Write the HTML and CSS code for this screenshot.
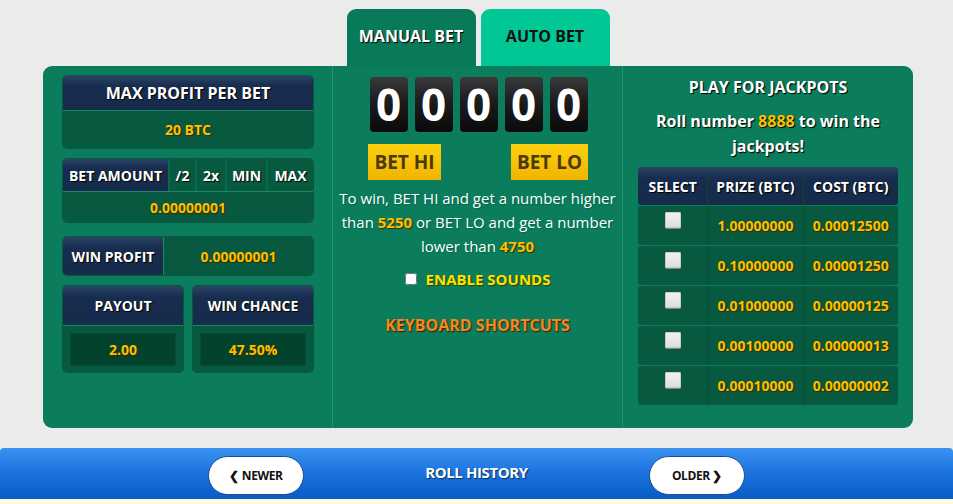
FILE: index.html
```
<!DOCTYPE html>
<html lang="en">
<head>
  <meta charset="UTF-8" />
  <meta name="viewport" content="width=device-width, initial-scale=1.0" />
  <title>Free BTC Multiply</title>
  <link rel="stylesheet" href="styles.css">
</head>
<body>
  <div class="tabs">
    <div class="tab tab-manual">MANUAL BET</div>
    <div class="tab tab-auto">AUTO BET</div>
  </div>

  <div class="panel">
    <!-- left: bet settings -->
    <div class="col col-left">
      <div class="box">
        <div class="head head-big">MAX PROFIT PER BET</div>
        <div class="val">20 BTC</div>
      </div>

      <div class="box amount">
        <div class="amount-row">
          <div class="head cell-label">BET AMOUNT</div>
          <div class="cell cell-half">/2</div>
          <div class="cell cell-double">2x</div>
          <div class="cell cell-min">MIN</div>
          <div class="cell cell-max">MAX</div>
        </div>
        <div class="val val-amount">0.00000001</div>
      </div>

      <div class="box profit">
        <div class="head profit-label">WIN PROFIT</div>
        <div class="val profit-val">0.00000001</div>
      </div>

      <div class="pair">
        <div class="box small">
          <div class="head small-head">PAYOUT</div>
          <div class="small-body"><div class="inset">2.00</div></div>
        </div>
        <div class="box small">
          <div class="head small-head">WIN CHANCE</div>
          <div class="small-body"><div class="inset">47.50%</div></div>
        </div>
      </div>
    </div>

    <!-- middle: roll -->
    <div class="col col-mid">
      <div class="digits">
        <span class="digit">0</span>
        <span class="digit">0</span>
        <span class="digit">0</span>
        <span class="digit">0</span>
        <span class="digit">0</span>
      </div>
      <div class="bet-btns">
        <button class="bet-btn bet-hi">BET HI</button>
        <button class="bet-btn bet-lo">BET LO</button>
      </div>
      <p class="rules">To win, BET HI and get a number higher than <b>5250</b> or BET LO and get a number lower than <b>4750</b></p>
      <label class="sounds"><input type="checkbox"> ENABLE SOUNDS</label>
      <div class="shortcuts">KEYBOARD SHORTCUTS</div>
    </div>

    <!-- right: jackpots -->
    <div class="col col-right">
      <div class="jp-title">PLAY FOR JACKPOTS</div>
      <div class="jp-text">Roll number <b>8888</b> to win the jackpots!</div>
      <table class="jp-table">
        <thead>
          <tr><th>SELECT</th><th>PRIZE (BTC)</th><th>COST (BTC)</th></tr>
        </thead>
        <tbody>
          <tr><td><span class="chk"></span></td><td>1.00000000</td><td>0.00012500</td></tr>
          <tr><td><span class="chk"></span></td><td>0.10000000</td><td>0.00001250</td></tr>
          <tr><td><span class="chk"></span></td><td>0.01000000</td><td>0.00000125</td></tr>
          <tr><td><span class="chk"></span></td><td>0.00100000</td><td>0.00000013</td></tr>
          <tr><td><span class="chk"></span></td><td>0.00010000</td><td>0.00000002</td></tr>
        </tbody>
      </table>
    </div>
  </div>

  <div class="history">
    <button class="pill">&#10094; NEWER</button>
    <div class="history-title">ROLL HISTORY</div>
    <button class="pill">OLDER &#10095;</button>
  </div>
  <div class="history-strip"></div>
</body>
</html>
```

FILE: styles.css
```
body { margin: 0; background: #ebebeb; font-family: "Open Sans", "Liberation Sans", sans-serif; color: #fff; overflow: hidden; }

.tabs { display: flex; justify-content: center; gap: 5px; padding-top: 9px; margin-left: 3px; }
.tab { width: 129px; height: 57px; box-sizing: border-box; border-radius: 9px 9px 0 0; padding-top: 16px; text-align: center; font-weight: 700; font-size: 16px; }
.tab-manual { background: #087a5a; color: #fff; text-shadow: 1px 1px 1px #000; }
.tab-auto { background: #00c794; color: #111; }

.panel { margin-left: 43px; width: 870px; height: 362px; background: #0b7d5c; border-radius: 9px; display: grid; grid-template-columns: 289px 291px 290px; }
.col { box-sizing: border-box; }
.col-mid { border-left: 1px solid #1e9770; border-right: 1px solid #1e9770; }

.head { background: linear-gradient(#2a4466, #172c4e 30%, #172b4c); color: #fff; font-weight: 700; font-size: 14px; text-shadow: 1px 1px 1px #000; display: flex; align-items: center; justify-content: center; }
.val { background: #07593f; color: #ffbf00; font-weight: 700; font-size: 14px; text-shadow: 1px 1px 1px #3a2a00; display: flex; align-items: center; justify-content: center; }

.col-left { padding: 10px 19px 0 20px; }
.box { border-radius: 4px; overflow: hidden; box-shadow: 0 0 0 1px #06583f; }
.box > .head-big { height: 34px; font-size: 16px; }
.box > .val { height: 38px; box-sizing: border-box; border-top: 1px solid #1b8a64; }

.amount { margin-top: 11px; }
.amount-row { display: flex; height: 32px; }
.amount-row .head { height: 32px; }
.cell-label { width: 105px; }
.cell { background: #07593f; border-left: 2px solid #0a6b4c; font-weight: 700; font-size: 14px; text-shadow: 1px 1px 1px #000; display: flex; align-items: center; justify-content: center; }
.cell-half { width: 25px; }
.cell-double { width: 28px; }
.cell-min { width: 39px; }
.cell-max { flex: 1; }
.box > .val-amount { height: 31px; }

.profit { margin-top: 15px; display: flex; height: 38px; }
.box > .profit-label { width: 100px; height: 38px; }
.box > .profit-val { flex: 1; height: 38px; border-top: 0; border-left: 1px solid #1b8a64; }

.pair { display: flex; gap: 10px; margin-top: 11px; }
.small { width: 120px; }
.box > .small-head { height: 39px; }
.small-body { background: #07593f; height: 47px; padding: 7px 7px 0 7px; box-sizing: border-box; border-top: 1px solid #1b8a64; }
.inset { background: #03432e; border: 1px solid #064d36; height: 33px; box-sizing: border-box; display: flex; align-items: center; justify-content: center; color: #ffbf00; font-weight: 700; font-size: 14px; text-shadow: 1px 1px 1px #3a2a00; }

.col-mid { text-align: center; padding-top: 11px; }
.digits { display: flex; justify-content: center; gap: 7px; margin-left: 2px; }
.digit { width: 38px; height: 55px; border-radius: 4px; background: linear-gradient(#3a3a3a, #1c1c1c 45%, #0a0a0a); color: #fff; font-weight: 700; font-size: 44px; line-height: 55px; }
.bet-btns { display: flex; justify-content: space-between; padding: 12px 34px 0 35px; }
.bet-btn { border: 0; padding: 0; height: 36px; background: linear-gradient(#fbd10f, #f1b400); color: #4b3a00; font-family: inherit; font-weight: 700; font-size: 19px; }
.bet-hi { width: 73px; }
.bet-lo { width: 77px; }
.rules { margin: 6px 0 0; padding: 0; font-size: 15px; line-height: 24px; text-shadow: 1px 1px 1px #064; }
.rules b { color: #ffbf00; text-shadow: 1px 1px 1px #3a2a00; }
.sounds { display: flex; justify-content: center; align-items: center; gap: 9px; margin-top: 11px; color: #ffe100; font-weight: 700; font-size: 15px; text-shadow: 1px 1px 1px #3a3a00; }
.sounds input { margin: 0; width: 12px; height: 12px; }
.shortcuts { margin-top: 25px; color: #f7871f; font-weight: 700; font-size: 16px; text-shadow: 1px 1px 1px #3a1a00; }

.col-right { padding: 10px 15px 0; text-align: center; }
.jp-title { font-weight: 700; font-size: 16px; line-height: 22px; text-shadow: 1px 1px 1px #000; }
.jp-text { margin-top: 11px; font-weight: 700; font-size: 16px; line-height: 25px; padding: 0 14px; text-shadow: 1px 1px 1px #000; }
.jp-text b { color: #ffbf00; font-weight: 700; }
.jp-table { width: 260px; margin-top: 7px; border-collapse: separate; border-spacing: 0 1px; }
.jp-table th { background: linear-gradient(#2a4466, #172c4e 30%, #172b4c); height: 38px; font-size: 14px; font-weight: 700; text-shadow: 1px 1px 1px #000; padding: 0; }
.jp-table td { background: #07593f; height: 39px; color: #ffbf00; font-weight: 700; font-size: 14px; text-shadow: 1px 1px 1px #3a2a00; padding: 0; }
.jp-table th + th, .jp-table td + td { border-left: 1px solid #0a4a34; }
.jp-table th:nth-child(1) { width: 70px; border-radius: 3px 0 0 3px; }
.jp-table th:nth-child(2), .jp-table th:nth-child(3) { width: 95px; }
.jp-table td:first-child { border-radius: 3px 0 0 3px; }
.jp-table td:last-child, .jp-table th:last-child { border-radius: 0 3px 3px 0; }
.chk { display: inline-block; width: 16px; height: 16px; border-radius: 2px; background: linear-gradient(#f2f2f2, #dcdcdc); box-shadow: 0 1px 0 #888, inset 0 0 0 1px #c9c9c9; vertical-align: -1px; position: relative; top: -4px; }

.history { margin-top: 20px; height: 51px; background: linear-gradient(#3a92f2, #1b72de 50%, #075dc4); border-radius: 4px 4px 0 0; display: flex; align-items: center; justify-content: center; }
.pill { width: 96px; height: 39px; border: 1px solid #1a4a90; border-radius: 20px; background: #fff; color: #111; font-family: inherit; font-weight: 700; font-size: 12px; letter-spacing: -0.4px; margin-top: 4px; }
.history-title { width: 345px; text-align: center; font-weight: 700; font-size: 15px; letter-spacing: -0.4px; text-shadow: 1px 1px 1px #04306a; margin-top: -4px; }
.history-strip { height: 10px; background: #fffbe3; }
```
